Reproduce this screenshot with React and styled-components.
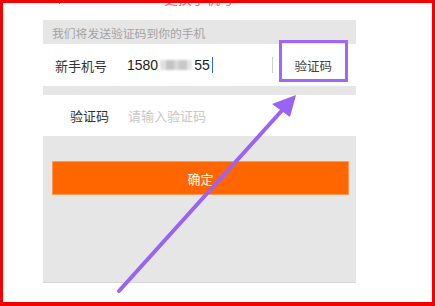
import React from "react";
import styled, { createGlobalStyle } from "styled-components";

const Global = createGlobalStyle`
  html, body { margin: 0; padding: 0; background: #fff; }
  body { font-family: "Noto Sans CJK SC", "Noto Sans", sans-serif; }
`;

const Frame = styled.div`
  position: relative;
  width: 435px;
  height: 306px;
  box-sizing: border-box;
  border: 3px solid #f40000;
  border-bottom-width: 4px;
  background: #fff;
  overflow: hidden;
`;

const Screen = styled.div`
  margin-left: 40px;
  width: 313px;
  display: flex;
  flex-direction: column;
`;

const TopBar = styled.div`
  position: relative;
  height: 17px;
  overflow: hidden;
  display: flex;
  align-items: flex-start;
`;

const Back = styled.div`
  margin-left: 12px;
  margin-top: -10px;
  width: 8px;
  height: 8px;
  border-left: 1.5px solid #444;
  border-bottom: 1.5px solid #444;
  transform: rotate(45deg);
`;

const Title = styled.div`
  margin-left: 100px;
  margin-top: -13px;
  font-size: 14px;
  line-height: 16px;
  color: #f07070;
`;

const Notice = styled.div`
  height: 24px;
  background: #e6e6e6;
  padding-left: 9px;
  display: flex;
  align-items: center;
  font-size: 11.8px;
  color: #a3a3a3;
`;

const Row = styled.div`
  height: ${(p) => p.$h}px;
  background: #fff;
  display: flex;
  align-items: center;
  padding-left: ${(p) => p.$pad}px;
  font-size: 13px;
`;

const Label = styled.span`
  color: #333;
  width: ${(p) => p.$w}px;
  flex: none;
`;

const Value = styled.span`
  color: #222;
  display: flex;
  align-items: center;
  font-family: "Liberation Sans", Arial, sans-serif;
  font-size: 14px;
`;

const Blurred = styled.span`
  width: 32px;
  height: 10px;
  margin: 0 2px;
  background: linear-gradient(90deg, #e0e0e0 0 20%, #c4c4c4 20% 45%, #d8d8d8 45% 60%, #c8c8c8 60% 85%, #e6e6e6 85%);
  filter: blur(1px);
`;

const Caret = styled.span`
  width: 1px;
  height: 16px;
  background: #2b6fd6;
  margin-left: 2px;
`;

const Divider = styled.span`
  margin-left: auto;
  width: 1px;
  height: 16px;
  background: #cfcfcf;
`;

const CodeLink = styled.span`
  margin-left: 21px;
  margin-right: 24px;
  font-size: 12.5px;
  color: #444;
`;

const Placeholder = styled.span`
  color: #c8c8c8;
`;

const Gap = styled.div`
  height: ${(p) => p.$h}px;
  background: #e6e6e6;
`;

const Panel = styled.div`
  height: 147px;
  background: #e6e6e6;
  border-bottom: 1px solid #d6d6d6;
  box-sizing: border-box;
  padding: 25px 7px 0 9px;
`;

const Button = styled.div`
  height: 34px;
  background: #ff6600;
  border: 1px solid #ff9a55;
  box-sizing: border-box;
  display: flex;
  align-items: center;
  justify-content: center;
  color: #fff;
  font-size: 13px;
`;

const Highlight = styled.div`
  position: absolute;
  left: 276px;
  top: 37px;
  width: 69px;
  height: 42px;
  box-sizing: border-box;
  border: 3px solid #a066f6;
`;

const Overlay = styled.svg`
  position: absolute;
  left: -3px;
  top: -3px;
  pointer-events: none;
`;

export default function App() {
  return (
    <>
      <Global />
      <Frame>
        <Screen>
          <TopBar>
            <Back />
            <Title>更换手机号</Title>
          </TopBar>
          <Notice>我们将发送验证码到你的手机</Notice>
          <Row $h={42} $pad={12}>
            <Label $w={72}>新手机号</Label>
            <Value>
              1580<Blurred />55<Caret />
            </Value>
            <Divider />
            <CodeLink>验证码</CodeLink>
          </Row>
          <Gap $h={9} />
          <Row $h={41} $pad={27}>
            <Label $w={58}>验证码</Label>
            <Placeholder>请输入验证码</Placeholder>
          </Row>
          <Panel>
            <Button>确定</Button>
          </Panel>
        </Screen>
        <Highlight />
        <Overlay width="435" height="306" viewBox="0 0 435 306">
          <line x1="119" y1="291" x2="286" y2="106" stroke="#9a62f5" strokeWidth="4" strokeLinecap="round" />
          <polygon points="296,95 272,104 290,117" fill="#9a62f5" />
        </Overlay>
      </Frame>
    </>
  );
}
